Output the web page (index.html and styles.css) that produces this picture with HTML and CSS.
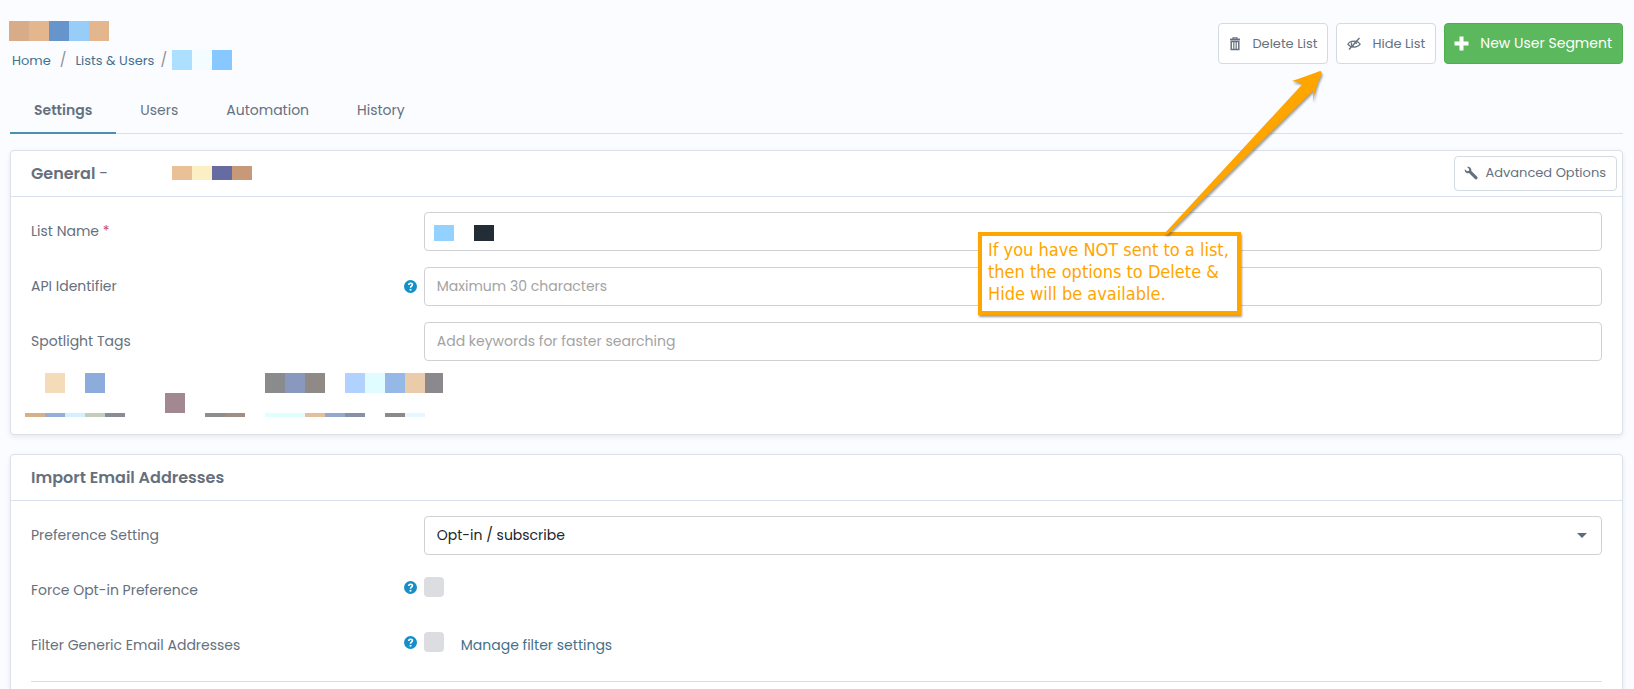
FILE: index.html
```html
<!DOCTYPE html>
<html lang="en">
<head>
<meta charset="utf-8">
<title>List settings</title>
<link rel="stylesheet" href="styles.css">
</head>
<body>
<div class="page">
  <header class="top">
    <div class="heading">
      <svg class="mosaic" width="100" height="20" aria-hidden="true"><path fill="#d8ac88" d="M0 0h20v20H0z"/><path fill="#e3b68e" d="M20 0h20v20H20zM80 0h20v20H80z"/><path fill="#6595ca" d="M40 0h20v20H40z"/><path fill="#98cdf7" d="M60 0h20v20H60z"/></svg>
      <nav class="crumbs" aria-label="Breadcrumb">
        <a href="#">Home</a><span class="slash">/</span><a href="#">Lists &amp; Users</a><span class="slash last">/</span>
        <svg class="mosaic" width="60" height="20" aria-hidden="true"><path fill="#addfff" d="M0 0h20v20H0z"/><path fill="#f3fcff" d="M20 0h20v20H20z"/><path fill="#86c8ff" d="M40 0h20v20H40z"/></svg>
      </nav>
    </div>
    <div class="actions">
      <button class="btn" type="button">
        <svg width="12" height="14" viewBox="0 0 12 14" fill="none" stroke="currentColor"><path d="M1 2.500h10" stroke-width="1.800"/><path d="M4 2V.8h4V2" stroke-width="1.200"/><path d="M2.200 4.500v8h7.600v-8z" stroke-width="1.500"/><path d="M4.500 5v7M6 5v7M7.500 5v7" stroke-width=".8"/></svg>
        Delete List</button>
      <button class="btn" type="button">
        <svg width="14" height="14" viewBox="0 0 14 14" fill="none" stroke="currentColor"><path d="M.8 7.200C3.500 3 10.500 3 13.200 7.200 10.500 11 3.500 11 .8 7.200z" stroke-width="1.200"/><path d="M4.700 5.500c-.9 2 .1 3.900 2.300 3.900M7.300 5.200c1.200 0 2 .8 2 1.900" stroke-width="1.300"/><path d="M12.500 1L2 12.500" stroke-width="1.400"/></svg>
        Hide List</button>
      <button class="btn primary" type="button">
        <svg width="15" height="15" viewBox="0 0 15 15" fill="currentColor"><path d="M5.500.5h4v5h5v4h-5v5h-4v-5h-5v-4h5z"/></svg>
        New User Segment</button>
    </div>
  </header>

  <nav class="tabs" aria-label="List sections">
    <a class="tab active" href="#">Settings</a>
    <a class="tab" href="#">Users</a>
    <a class="tab" href="#">Automation</a>
    <a class="tab" href="#">History</a>
  </nav>

  <section class="card">
    <div class="card-head">
      <h2>General <span class="dash">-</span></h2>
      <svg class="mosaic list-title" width="80" height="14" aria-hidden="true"><path fill="#eac197" d="M0 0h20v14H0z"/><path fill="#fdefc4" d="M20 0h20v14H20z"/><path fill="#666ca2" d="M40 0h20v14H40z"/><path fill="#c79979" d="M60 0h20v14H60z"/></svg>
      <button class="btn small" type="button">
        <svg width="14" height="14" viewBox="0 0 14 14" fill="currentColor"><path d="M3 .9C5.500.1 8 2.300 7.200 4.800l6 6c1.400 1.500-.8 3.600-2.200 2.200L5 7C2.500 7.900.2 5.600.8 3.200l2.300 2 1.800-.4.300-1.700z"/></svg>
        Advanced Options</button>
    </div>
    <div class="card-body">
      <div class="row">
        <label for="list-name">List Name <span class="req">*</span></label>
        <div class="field">
          <input class="control" id="list-name" type="text">
          <svg class="mosaic value" width="60" height="16" aria-hidden="true"><path fill="#93d1ff" d="M0 0h20v16H0z"/><path fill="#232d37" d="M40 0h20v16H40z"/></svg>
        </div>
      </div>
      <div class="row">
        <label for="api-id">API Identifier</label>
        <svg class="help" width="13" height="13" viewBox="0 0 13 13"><circle cx="6.500" cy="6.500" r="6.500" fill="#148fc8"/><path d="M4.700 5c0-2.500 3.700-2.300 3.700-.2C8.400 6.200 6.500 6.200 6.500 7.800" fill="none" stroke="#fff" stroke-width="1.600"/><path fill="#fff" d="M5.600 8.900h1.800v1.700H5.600z"/></svg>
        <div class="field"><input class="control" id="api-id" type="text" placeholder="Maximum 30 characters"></div>
      </div>
      <div class="row">
        <label for="tags">Spotlight Tags</label>
        <div class="field"><input class="control" id="tags" type="text" placeholder="Add keywords for faster searching"></div>
      </div>
      <svg class="mosaic details" width="418" height="44" aria-hidden="true">
        <path fill="#f4dbba" d="M20 0h20v20H20z"/><path fill="#8cadd9" d="M60 0h20v20H60z"/>
        <path fill="#898b8c" d="M240 0h20v20h-20z"/><path fill="#8998bd" d="M260 0h20v20h-20z"/><path fill="#8f8a85" d="M280 0h20v20h-20z"/>
        <path fill="#b1d2ff" d="M320 0h20v20h-20z"/><path fill="#e1fcff" d="M340 0h20v20h-20z"/><path fill="#96b8e7" d="M360 0h20v20h-20z"/><path fill="#ebccaa" d="M380 0h20v20h-20z"/><path fill="#8b888e" d="M400 0h18v20h-18z"/>
        <path fill="#a28891" d="M140 20h20v20h-20z"/>
        <path fill="#d8af88" d="M0 40h20v4H0z"/><path fill="#95aed5" d="M20 40h20v4H20z"/><path fill="#d4f0ff" d="M40 40h20v4H40z"/><path fill="#c1ceb9" d="M60 40h20v4H60z"/><path fill="#898c98" d="M80 40h20v4H80z"/>
        <path fill="#8b8e8c" d="M180 40h20v4h-20z"/><path fill="#9f8e84" d="M200 40h20v4h-20z"/>
        <path fill="#dcffff" d="M240 40h40v4h-40z"/><path fill="#e3bf9b" d="M280 40h20v4h-20z"/><path fill="#94a8cd" d="M300 40h20v4h-20z"/><path fill="#8690aa" d="M320 40h20v4h-20z"/>
        <path fill="#8b8a89" d="M360 40h20v4h-20z"/><path fill="#e5f8ff" d="M380 40h20v4h-20z"/>
      </svg>
    </div>
  </section>

  <section class="card">
    <div class="card-head"><h2>Import Email Addresses</h2></div>
    <div class="card-body">
      <div class="row">
        <label for="pref">Preference Setting</label>
        <div class="field">
          <select class="control" id="pref"><option>Opt-in / subscribe</option></select>
          <svg class="caret" width="10" height="5" aria-hidden="true"><path fill="#5d6b7a" d="M0 0h10L5 5z"/></svg>
        </div>
      </div>
      <div class="row check">
        <label for="force">Force Opt-in Preference</label>
        <svg class="help" width="13" height="13" viewBox="0 0 13 13"><circle cx="6.500" cy="6.500" r="6.500" fill="#148fc8"/><path d="M4.700 5c0-2.500 3.700-2.300 3.700-.2C8.400 6.200 6.500 6.200 6.500 7.800" fill="none" stroke="#fff" stroke-width="1.600"/><path fill="#fff" d="M5.600 8.900h1.800v1.700H5.600z"/></svg>
        <div class="field"><input class="box" id="force" type="checkbox"></div>
      </div>
      <div class="row check">
        <label for="filter">Filter Generic Email Addresses</label>
        <svg class="help" width="13" height="13" viewBox="0 0 13 13"><circle cx="6.500" cy="6.500" r="6.500" fill="#148fc8"/><path d="M4.700 5c0-2.500 3.700-2.300 3.700-.2C8.400 6.200 6.500 6.200 6.500 7.800" fill="none" stroke="#fff" stroke-width="1.600"/><path fill="#fff" d="M5.600 8.900h1.800v1.700H5.600z"/></svg>
        <div class="field"><input class="box" id="filter" type="checkbox"><a class="manage" href="#">Manage filter settings</a></div>
      </div>
      <hr>
    </div>
  </section>

  <aside class="callout">
    <svg class="arrow" width="160" height="166" viewBox="0 0 160 166" aria-hidden="true"><path fill="#ffa500" d="M156 1q2 0 1.500 3Q150 20 149.500 32l-.5-11.500L4 164H0L139 13.500 128 11Q140 7 156 1z"/></svg>
    <p>If you have NOT sent to a list,<br>then the options to Delete &amp;<br>Hide will be available.</p>
  </aside>
</div>
</body>
</html>
```
FILE: styles.css
```css
* { box-sizing: border-box; }
html { overflow: hidden; }
body {
  margin: 0;
  background: #fbfcff;
  color: #66707d;
  font: 14px/20px Poppins, Inter, sans-serif;
}
a { color: #45708c; text-decoration: none; }
svg { display: block; flex: none; }
.page { position: relative; padding: 21px 11px 0 10px; }

.top { display: flex; justify-content: space-between; align-items: flex-start; }
.heading { margin-left: -1px; }
.crumbs { display: flex; align-items: center; height: 20px; margin-top: 9px; padding-left: 3px; font-size: 13px; }
.crumbs a { padding-top: 1px; }
.slash { padding: 0 9px; color: #8d8f96; font-size: 14px; }
.slash.last { padding: 0 5px 0 6px; }
.actions { display: flex; gap: 8px; padding-top: 2px; }
.btn {
  display: flex;
  align-items: center;
  gap: 11px;
  height: 41px;
  padding: 0 10px;
  border: 1px solid #d3dbe1;
  border-radius: 4px;
  background: #fff;
  color: #66717f;
  font: inherit;
  font-size: 13px;
  white-space: nowrap;
}
.btn.primary { padding: 0 10px 1px 9px; border-color: #4fae50; background: #5cb85c; color: #fff; font-size: 14px; }
.btn.small { height: 35px; margin-left: auto; padding: 0 10px 2px 9px; gap: 7px; }

.tabs { display: flex; margin-top: 17px; border-bottom: 1px solid #dbe1e8; }
.tab { margin-bottom: -1px; padding: 13px 24px 12px; border-bottom: 2px solid transparent; color: #66717f; }
.tab.active { border-color: #4b8fb5; font-weight: 600; }

.card {
  margin-top: 16px;
  border: 1px solid #dbe1ea;
  border-radius: 4px;
  background: #fff;
  box-shadow: 0 2px 5px rgba(90, 110, 140, .14);
}
.card + .card { margin-top: 19px; }
.card-head { display: flex; align-items: center; height: 46px; padding: 0 5px 0 20px; border-bottom: 1px solid #dbe1ea; }
.card-head h2 { margin: 0; font-size: 16px; font-weight: 600; }
.dash { font-weight: 400; }
.list-title { margin: 0 0 1px 64px; }
.card-body { padding: 15px 20px 17px; }
.row {
  display: grid;
  grid-template-columns: calc(25% - 13px) 13px 75%;
  align-items: center;
  height: 39px;
  margin-bottom: 16px;
}
.row label { grid-column: 1; padding-bottom: 2px; }
.help { grid-column: 2; margin-left: -7px; }
.field { grid-column: 3; position: relative; display: flex; align-items: center; }
.req { color: #d04a5a; }
.control {
  width: 100%;
  height: 39px;
  padding: 0 12px 1px;
  border: 1px solid #cfd1d4;
  border-radius: 4px;
  background: #fff;
  color: #212529;
  font: inherit;
  appearance: none;
}
.control::placeholder { color: #a3a3a3; opacity: 1; }
.value { position: absolute; left: 10px; top: 13px; }
.caret { position: absolute; right: 15px; top: 17px; }
.details { margin: -4px 0 0 -6px; }
.box { width: 20px; height: 20px; margin: 0; border-radius: 4px; background: #dcdde1; appearance: none; }
.check .help, .check .box { margin-top: -7px; }
.manage { margin-left: 17px; padding-bottom: 2px; }
hr { margin: 0; border: 0; border-top: 1px solid #d8e0e7; }

.callout {
  position: absolute;
  top: 232px;
  right: 393px;
  width: 263px;
  padding: 3px 0 6px 6px;
  border: 4px solid #ffa500;
  background: #fff;
  box-shadow: 1px 2px 2px rgba(60, 60, 60, .5);
  color: #ffa500;
  font: 18px/22px Tahoma, "DejaVu Sans Condensed", "Noto Sans", sans-serif;
  white-space: nowrap;
}
.callout p { margin: 0; }
.arrow { position: absolute; left: 182px; bottom: 100%; filter: drop-shadow(1px 2px 1px rgba(60, 60, 60, .5)); }
```
